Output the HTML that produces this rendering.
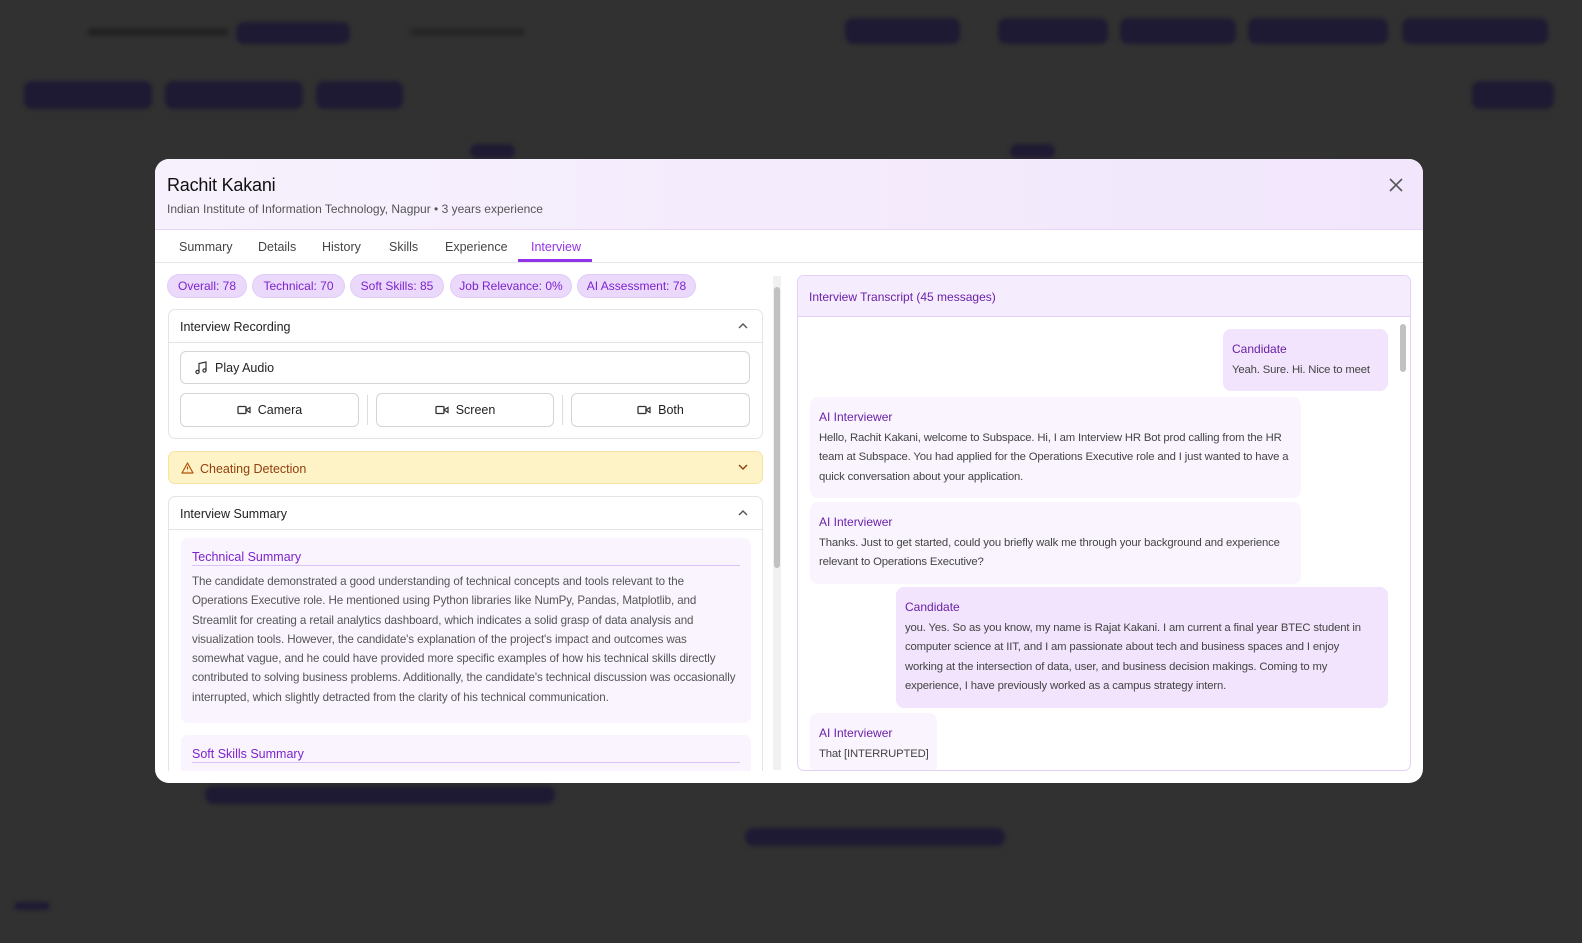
<!DOCTYPE html>
<html><head><meta charset="utf-8"><style>
*{box-sizing:border-box;margin:0;padding:0}
body{width:1582px;height:943px;background:#313131;font-family:"Liberation Sans",sans-serif;position:relative;overflow:hidden;font-size:12px;color:#333}
.bg{position:absolute;background:#1f1a33;border-radius:8px;filter:blur(2px)}
.bgt{position:absolute;background:#3a3a3a;height:8px;border-radius:3px;filter:blur(2px)}
.modal{position:absolute;left:155px;top:159px;width:1268px;height:624px;background:#fff;border-radius:14px;overflow:hidden}
.hdr{height:71px;background:linear-gradient(90deg,#f7f1fd,#f1e6fc);border-bottom:1px solid #e6d8f5;padding:16px 12px}
.hdr h1{font-size:18px;font-weight:normal;color:#111;letter-spacing:-.2px}
.hdr p{font-size:12px;color:#555;margin-top:6px}
.close{position:absolute;right:18px;top:17px;width:18px;height:18px}
.tabs{height:33px;border-bottom:1px solid #e5e5e5;position:relative}
.tab{position:absolute;top:10px;font-size:12.5px;color:#444}
.tab.act{color:#9333ea}
.uline{position:absolute;left:363px;top:29px;width:74px;height:3px;background:#9333ea}
.pill{position:absolute;top:116px;height:22px;border-radius:11px;background:#ead9fb;color:#7e22ce;font-size:12px;line-height:22px;text-align:center;box-shadow:0 0 0 1px #e2cbf8}
.card{position:absolute;left:13px;width:595px;border:1px solid #e4e4e7;border-radius:7px;background:#fff}
.ch{height:33px;border-bottom:1px solid #e4e4e7;padding:10px 11px;font-size:12.5px;color:#222;position:relative}
.chev{position:absolute;right:14px;top:12px}
.btn{position:absolute;border:1px solid #d4d4d8;border-radius:6px;height:34px;font-size:12.5px;color:#222;display:flex;align-items:center;justify-content:center;gap:7px}
.sum{position:absolute;left:12px;width:570px;background:#f9f4fe;border-radius:7px;padding:12px 11px}
.sum h3{font-size:12.5px;font-weight:normal;color:#7e22ce;border-bottom:1px solid #dcc3f7;padding-bottom:1px}
.sum p{font-size:11.6px;line-height:19.3px;color:#555;margin-top:6px;letter-spacing:-.1px}
.rp{position:absolute;left:642px;top:116px;width:614px;height:496px;border:1px solid #e4d0f7;border-radius:7px;overflow:hidden}
.rph{height:41px;background:#f5ecfd;border-bottom:1px solid #e4d0f7;padding:14px 11px;font-size:12px;color:#6b21a8}
.msg{position:absolute;border-radius:8px;padding:11px 9px;font-size:11.3px;line-height:19.5px;color:#444;letter-spacing:-.15px}
.msg b{display:block;font-weight:normal;color:#6b21a8;margin-bottom:1px;font-size:12px;letter-spacing:0}
.ai{background:#f9f4fe}.cd{background:#f1e4fc}
.nw{white-space:nowrap}
</style></head><body>
<div class="bg" style="left:236px;top:22px;width:114px;height:22px"></div>
<div class="bgt" style="left:88px;top:28px;width:140px;background:#222"></div>
<div class="bgt" style="left:410px;top:28px;width:115px;background:#262626"></div>
<div class="bg" style="left:845px;top:18px;width:115px;height:26px"></div>
<div class="bg" style="left:998px;top:18px;width:110px;height:26px"></div>
<div class="bg" style="left:1120px;top:18px;width:116px;height:26px"></div>
<div class="bg" style="left:1248px;top:18px;width:140px;height:26px"></div>
<div class="bg" style="left:1402px;top:18px;width:146px;height:26px"></div>
<div class="bg" style="left:24px;top:81px;width:128px;height:28px"></div>
<div class="bg" style="left:165px;top:81px;width:138px;height:28px"></div>
<div class="bg" style="left:316px;top:81px;width:87px;height:28px"></div>
<div class="bg" style="left:1472px;top:81px;width:82px;height:28px"></div>
<div class="bg" style="left:470px;top:144px;width:45px;height:14px"></div>
<div class="bg" style="left:1010px;top:144px;width:45px;height:14px"></div>
<div class="bg" style="left:205px;top:786px;width:350px;height:18px"></div>
<div class="bg" style="left:745px;top:828px;width:260px;height:18px"></div>
<div class="bg" style="left:14px;top:902px;width:36px;height:8px"></div>

<div class="modal">
 <div class="hdr"><h1>Rachit Kakani</h1><p>Indian Institute of Information Technology, Nagpur • 3 years experience</p></div>
 <svg class="close" viewBox="0 0 18 18"><path d="M3 3L15 15M15 3L3 15" stroke="#555" stroke-width="1.6" fill="none"/></svg>
 <div class="tabs">
  <span class="tab" style="left:24px">Summary</span><span class="tab" style="left:103px">Details</span><span class="tab" style="left:167px">History</span><span class="tab" style="left:234px">Skills</span><span class="tab" style="left:290px">Experience</span><span class="tab act" style="left:376px">Interview</span>
  <div class="uline"></div>
 </div>
 <div class="pill" style="left:13px;width:78px">Overall: 78</div>
 <div class="pill" style="left:98px;width:91px">Technical: 70</div>
 <div class="pill" style="left:196px;width:92px">Soft Skills: 85</div>
 <div class="pill" style="left:296px;width:120px">Job Relevance: 0%</div>
 <div class="pill" style="left:423px;width:117px">AI Assessment: 78</div>

 <div class="card" style="top:150px;height:130px">
  <div class="ch">Interview Recording<svg class="chev" width="10" height="7" viewBox="0 0 10 7"><path d="M1 6L5 2L9 6" stroke="#555" stroke-width="1.4" fill="none"/></svg></div>
  <div class="btn" style="left:11px;top:41px;width:570px;height:33px;justify-content:flex-start;padding-left:13px"><svg width="14" height="14" viewBox="0 0 14 14"><path d="M5 11V2.5L12 1V9.5" stroke="#333" stroke-width="1.2" fill="none"/><circle cx="3.5" cy="11" r="1.6" stroke="#333" stroke-width="1.2" fill="none"/><circle cx="10.5" cy="9.5" r="1.6" stroke="#333" stroke-width="1.2" fill="none"/></svg>Play Audio</div>
  <div class="btn" style="left:11px;top:83px;width:179px"><svg width="14" height="10" viewBox="0 0 14 10"><rect x="1" y="1.5" width="8" height="7" rx="1" stroke="#333" stroke-width="1.3" fill="none"/><path d="M9 5L13 2.5V7.5Z" stroke="#333" stroke-width="1.2" fill="none"/></svg>Camera</div>
  <div style="position:absolute;left:198px;top:85px;width:1px;height:30px;background:#ddd"></div>
  <div class="btn" style="left:207px;top:83px;width:178px"><svg width="14" height="10" viewBox="0 0 14 10"><rect x="1" y="1.5" width="8" height="7" rx="1" stroke="#333" stroke-width="1.3" fill="none"/><path d="M9 5L13 2.5V7.5Z" stroke="#333" stroke-width="1.2" fill="none"/></svg>Screen</div>
  <div style="position:absolute;left:393px;top:85px;width:1px;height:30px;background:#ddd"></div>
  <div class="btn" style="left:402px;top:83px;width:179px"><svg width="14" height="10" viewBox="0 0 14 10"><rect x="1" y="1.5" width="8" height="7" rx="1" stroke="#333" stroke-width="1.3" fill="none"/><path d="M9 5L13 2.5V7.5Z" stroke="#333" stroke-width="1.2" fill="none"/></svg>Both</div>
 </div>
 <div class="card" style="top:292px;height:33px;background:#fef3c7;border-color:#f5e3a4">
  <div class="ch" style="border:0;color:#92400e;padding-left:31px"><svg style="position:absolute;left:12px;top:10px" width="13" height="12" viewBox="0 0 13 12"><path d="M6.5 1L12 11H1Z" stroke="#b45309" stroke-width="1.2" fill="none" stroke-linejoin="round"/><path d="M6.5 4.5V7.5M6.5 9V9.4" stroke="#b45309" stroke-width="1.2"/></svg>Cheating Detection<svg class="chev" width="10" height="7" viewBox="0 0 10 7"><path d="M1 1L5 5L9 1" stroke="#92400e" stroke-width="1.4" fill="none"/></svg></div>
 </div>
 <div class="card" style="top:337px;height:300px">
  <div class="ch">Interview Summary<svg class="chev" width="10" height="7" viewBox="0 0 10 7"><path d="M1 6L5 2L9 6" stroke="#555" stroke-width="1.4" fill="none"/></svg></div>
  <div class="sum" style="top:41px;height:185px"><h3>Technical Summary</h3><p>The candidate demonstrated a good understanding of technical concepts and tools relevant to the Operations Executive role. He mentioned using Python libraries like NumPy, Pandas, Matplotlib, and Streamlit for creating a retail analytics dashboard, which indicates a solid grasp of data analysis and visualization tools. However, the candidate's explanation of the project's impact and outcomes was somewhat vague, and he could have provided more specific examples of how his technical skills directly contributed to solving business problems. Additionally, the candidate's technical discussion was occasionally interrupted, which slightly detracted from the clarity of his technical communication.</p></div>
  <div class="sum" style="top:238px;height:60px"><h3>Soft Skills Summary</h3></div>
 </div>
 <div style="position:absolute;left:0;top:612px;width:640px;height:12px;background:#fff"></div>
 <div style="position:absolute;left:618px;top:117px;width:8px;height:494px;background:#f1f1f1"></div>
 <div style="position:absolute;left:619px;top:128px;width:6px;height:281px;background:#c1c1c1;border-radius:3px"></div>

 <div class="rp">
  <div class="rph">Interview Transcript (45 messages)</div>
  <div style="position:absolute;right:4px;top:48px;width:6px;height:48px;background:#c1c1c1;border-radius:3px"></div>
  <div class="msg cd nw" style="left:425px;top:53px;width:165px">
   <b>Candidate</b>Yeah. Sure. Hi. Nice to meet</div>
  <div class="msg ai" style="left:12px;top:121px;width:491px"><b>AI Interviewer</b>Hello, Rachit Kakani, welcome to Subspace. Hi, I am Interview HR Bot prod calling from the HR team at Subspace. You had applied for the Operations Executive role and I just wanted to have a quick conversation about your application.</div>
  <div class="msg ai" style="left:12px;top:226px;width:491px"><b>AI Interviewer</b>Thanks. Just to get started, could you briefly walk me through your background and experience relevant to Operations Executive?</div>
  <div class="msg cd" style="left:98px;top:311px;width:492px"><b>Candidate</b>you. Yes. So as you know, my name is Rajat Kakani. I am current a final year BTEC student in computer science at IIT, and I am passionate about tech and business spaces and I enjoy working at the intersection of data, user, and business decision makings. Coming to my experience, I have previously worked as a campus strategy intern.</div>
  <div class="msg ai nw" style="left:12px;top:437px;width:127px;height:60px"><b>AI Interviewer</b>That [INTERRUPTED]</div>
 </div>
</div>
</body></html>
